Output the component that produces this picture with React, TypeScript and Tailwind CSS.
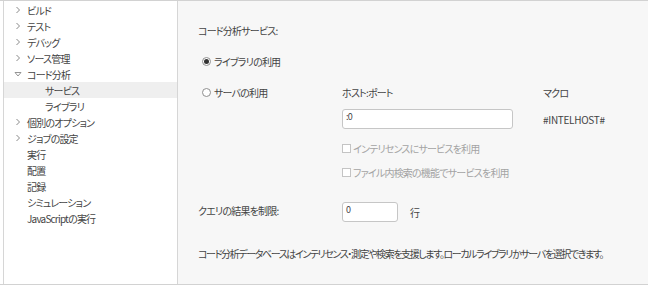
import React from "react";

const font = "[font-family:'Noto_Sans_CJK_JP','Noto_Sans',sans-serif] [font-feature-settings:'palt'] tracking-[-0.8px]";

type Node = { label: string; kind: "closed" | "open" | "leaf" | "child"; active?: boolean };

const tree: Node[] = [
  { label: "ビルド", kind: "closed" },
  { label: "テスト", kind: "closed" },
  { label: "デバッグ", kind: "closed" },
  { label: "ソース管理", kind: "closed" },
  { label: "コード分析", kind: "open" },
  { label: "サービス", kind: "child", active: true },
  { label: "ライブラリ", kind: "child" },
  { label: "個別のオプション", kind: "closed" },
  { label: "ジョブの設定", kind: "closed" },
  { label: "実行", kind: "leaf" },
  { label: "配置", kind: "leaf" },
  { label: "記録", kind: "leaf" },
  { label: "シミュレーション", kind: "leaf" },
  { label: "JavaScriptの実行", kind: "leaf" },
];

const Chevron = ({ open }: { open: boolean }) =>
  open ? (
    <svg width="8" height="8" viewBox="0 0 8 8" className="shrink-0">
      <path d="M1 2.5 L7 2.5 L4 6 Z" fill="none" stroke="#8a8a8a" strokeWidth="0.9" strokeLinejoin="round" />
    </svg>
  ) : (
    <svg width="8" height="8" viewBox="0 0 8 8" className="shrink-0">
      <path d="M2.5 1 L5.5 4 L2.5 7" fill="none" stroke="#8a8a8a" strokeWidth="1" />
    </svg>
  );

const Radio = ({ checked }: { checked?: boolean }) => (
  <span className="w-[9px] h-[9px] rounded-full border border-[#8f8f8f] bg-white flex items-center justify-center shrink-0">
    {checked && <span className="w-[5px] h-[5px] rounded-full bg-[#333]" />}
  </span>
);

const Check = () => <span className="w-[9px] h-[9px] border border-[#c4c4c4] bg-white shrink-0" />;

export default function App() {
  return (
    <div className={`w-[648px] h-[287px] bg-white ${font} text-[10px] text-[#444]`}>
      <div className="h-[285px] flex border-t border-b border-[#d2d2d2]">
        <div className="w-[175px] ml-[3px] bg-white border-l border-r border-[#d6d6d6] pt-[1px]">
          {tree.map((n) => (
            <div
              key={n.label}
              className={`h-4 flex items-center ${n.active ? "bg-[#efefef]" : ""}`}
            >
              <span className="w-[23px] pl-[10px] flex items-center">
                {(n.kind === "closed" || n.kind === "open") && <Chevron open={n.kind === "open"} />}
              </span>
              <span className={n.kind === "child" ? "pl-[18px]" : ""}>{n.label}</span>
            </div>
          ))}
        </div>

        <div className="flex-1 bg-[#f7f7f7] pl-[20px] pt-[21px] whitespace-nowrap">
          <div className="h-4 flex items-center">コード分析サービス:</div>

          <div className="h-4 mt-[15px] flex items-center gap-[3px]">
            <span className="w-[1px]" />
            <Radio checked />
            <span>ライブラリの利用</span>
          </div>

          <div className="h-4 mt-[15px] flex items-center">
            <div className="w-[144px] flex items-center gap-[3px]">
              <span className="w-[1px]" />
              <Radio />
              <span>サーバの利用</span>
            </div>
            <div className="w-[201px]">ホスト:ポート</div>
            <div>マクロ</div>
          </div>

          <div className="h-5 mt-[9px] flex items-center">
            <div className="w-[144px]" />
            <div className="w-[201px]">
              <div className="w-[171px] h-5 bg-white border border-[#c6c6c6] rounded-[3px] pl-[3px] text-[9px] leading-[14px]">
                :0
              </div>
            </div>
            <div className="tracking-[-0.3px]">#INTELHOST#</div>
          </div>

          <div className="h-4 mt-[11px] flex items-center text-[#a3a3a3]">
            <div className="w-[144px]" />
            <Check />
            <span className="ml-[2px]">インテリセンスにサービスを利用</span>
          </div>

          <div className="h-4 mt-[8px] flex items-center text-[#a3a3a3]">
            <div className="w-[144px]" />
            <Check />
            <span className="ml-[2px]">ファイル内検索の機能でサービスを利用</span>
          </div>

          <div className="h-5 mt-[22px] flex items-center">
            <div className="w-[144px] -mt-[3px]">クエリの結果を制限:</div>
            <div className="w-[56px] h-5 bg-white border border-[#c6c6c6] rounded-[3px] pl-[3px] text-[9px] leading-[14px]">
              0
            </div>
            <div className="ml-[12px]">行</div>
          </div>

          <div className="h-4 mt-[23px] flex items-center tracking-[-1.4px]">
            コード分析データベースはインテリセンス・測定や検索を支援します。ローカルライブラリかサーバを選択できます。
          </div>
        </div>
      </div>
    </div>
  );
}
